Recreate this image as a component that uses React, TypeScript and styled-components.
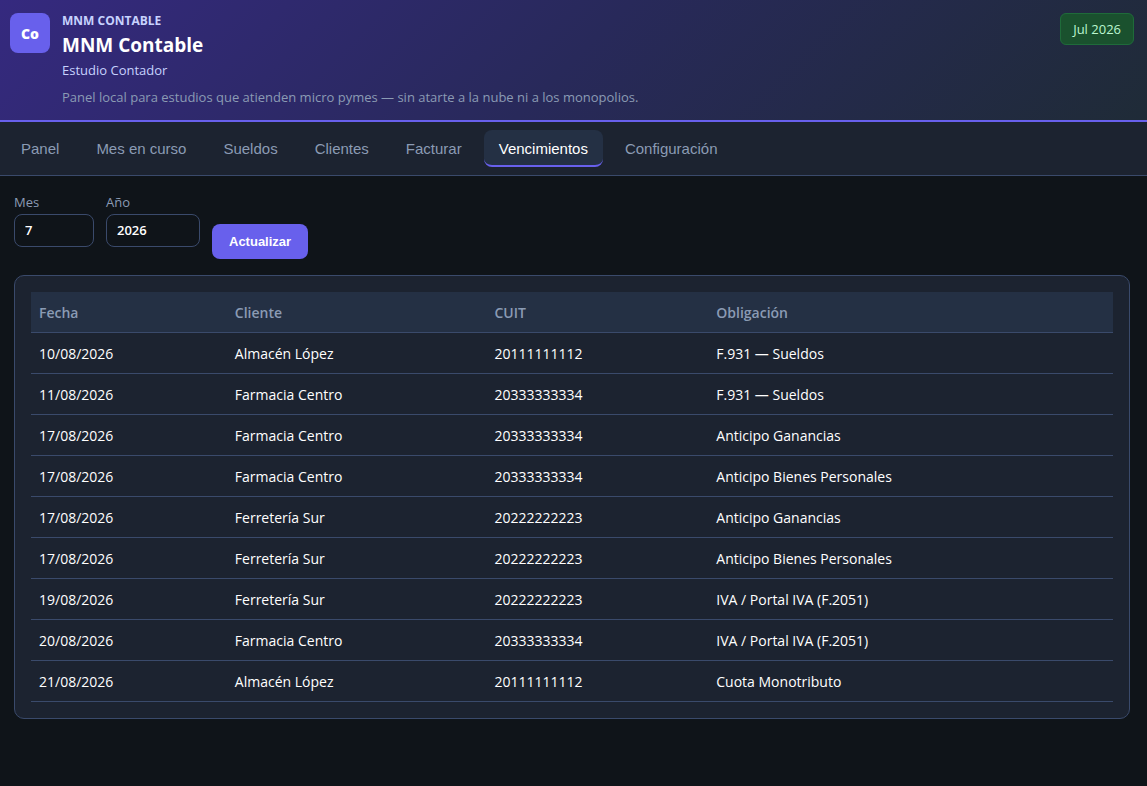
import React, { useState } from 'react';
import styled, { createGlobalStyle } from 'styled-components';

const GlobalStyle = createGlobalStyle`
  *, *::before, *::after { box-sizing: border-box; }
  body {
    margin: 0;
    background: #0f1419;
    color: #ffffff;
    font-family: 'Segoe UI', 'Open Sans', 'Noto Sans', sans-serif;
    font-size: 14px;
  }
`;

const Header = styled.header`
  display: flex;
  align-items: flex-start;
  gap: 12px;
  padding: 12px 13px 13px 10px;
  background: linear-gradient(135deg, #35297f 0%, #28295a 50%, #1f2b37 100%);
  border-bottom: 2px solid #6860ec;
`;

const Logo = styled.div`
  display: flex;
  align-items: center;
  justify-content: center;
  width: 40px;
  height: 40px;
  margin-top: 1px;
  border-radius: 8px;
  background: #6860ec;
  font-size: 14px;
  font-weight: 800;
`;

const Brand = styled.div`
  flex: 1;
`;

const Eyebrow = styled.p`
  margin: 0;
  color: #c7d2fe;
  font-size: 12px;
  line-height: 18px;
  font-weight: 700;
  text-transform: uppercase;
`;

const Title = styled.h1`
  margin: 0;
  font-size: 19px;
  line-height: 30px;
  font-weight: 700;
`;

const Subtitle = styled.p`
  margin: 0;
  color: #c7d2fe;
  font-size: 13px;
  line-height: 20px;
`;

const Tagline = styled.p`
  margin: 7px 0 0;
  color: #8b9bb4;
  font-size: 13px;
  line-height: 20px;
`;

const Period = styled.span`
  margin-top: 1px;
  padding: 5px 12px;
  border: 1px solid #1f6b3a;
  border-radius: 6px;
  background: #1a512e;
  color: #bbf7d0;
  font-size: 13px;
  line-height: 20px;
`;

const Nav = styled.nav`
  display: flex;
  flex-wrap: wrap;
  gap: 7px;
  padding: 8px 6px;
  background: #1c2330;
  border-bottom: 1px solid #3a4a6b;
`;

const Tab = styled.button<{ $active: boolean }>`
  height: 37px;
  padding: 2px 15px 0;
  border: 0;
  border-bottom: 2px solid ${p => (p.$active ? '#6860ec' : 'transparent')};
  border-radius: 8px;
  background: ${p => (p.$active ? '#243044' : 'transparent')};
  color: ${p => (p.$active ? '#ffffff' : '#8b9bb4')};
  font: 15px 'Liberation Sans', Arial, sans-serif;
  cursor: pointer;
`;

const Main = styled.main`
  padding: 16px 17px 16px 14px;
`;

const Filters = styled.form`
  display: flex;
  align-items: flex-end;
  gap: 12px;
  margin-bottom: 16px;
`;

const Field = styled.label<{ $width: number }>`
  display: flex;
  flex-direction: column;
  gap: 2px;
  width: ${p => p.$width}px;
  margin-bottom: 12px;
  color: #8b9bb4;
  font-size: 13px;
  line-height: 20px;
`;

const Input = styled.input`
  width: 100%;
  height: 33px;
  padding: 0 10px 2px;
  border: 1px solid #3a4a6b;
  border-radius: 8px;
  background: #0f1419;
  color: #ffffff;
  font: 600 13px 'Segoe UI', 'Open Sans', 'Noto Sans', sans-serif;
`;

const Submit = styled.button`
  height: 35px;
  padding: 0 17px;
  border: 0;
  border-radius: 8px;
  background: #6860ec;
  color: #ffffff;
  font: bold 13px 'Liberation Sans', Arial, sans-serif;
  cursor: pointer;
`;

const Card = styled.section`
  padding: 16px;
  border: 1px solid #3a4a6b;
  border-radius: 10px;
  background: #1c2330;
`;

const Table = styled.table`
  width: 100%;
  table-layout: fixed;
  border-spacing: 0;
`;

const HeadCell = styled.th<{ $width: string }>`
  width: ${p => p.$width};
  height: 41px;
  padding: 0 8px;
  border-bottom: 1px solid #3a4a6b;
  background: #243044;
  color: #8b9bb4;
  font-size: 14px;
  font-weight: 600;
  text-align: left;
`;

const Cell = styled.td`
  height: 41px;
  padding: 0 8px;
  border-bottom: 1px solid #3a4a6b;
  font-size: 14px;
`;

const tabs = ['Panel', 'Mes en curso', 'Sueldos', 'Clientes', 'Facturar', 'Vencimientos', 'Configuración'];

const columns = [
  { label: 'Fecha', width: '18.1%' },
  { label: 'Cliente', width: '24%' },
  { label: 'CUIT', width: '20.5%' },
  { label: 'Obligación', width: '37.4%' },
];

const rows = [
  ['10/08/2026', 'Almacén López', '20111111112', 'F.931 — Sueldos'],
  ['11/08/2026', 'Farmacia Centro', '20333333334', 'F.931 — Sueldos'],
  ['17/08/2026', 'Farmacia Centro', '20333333334', 'Anticipo Ganancias'],
  ['17/08/2026', 'Farmacia Centro', '20333333334', 'Anticipo Bienes Personales'],
  ['17/08/2026', 'Ferretería Sur', '20222222223', 'Anticipo Ganancias'],
  ['17/08/2026', 'Ferretería Sur', '20222222223', 'Anticipo Bienes Personales'],
  ['19/08/2026', 'Ferretería Sur', '20222222223', 'IVA / Portal IVA (F.2051)'],
  ['20/08/2026', 'Farmacia Centro', '20333333334', 'IVA / Portal IVA (F.2051)'],
  ['21/08/2026', 'Almacén López', '20111111112', 'Cuota Monotributo'],
];

export default function App() {
  const [active, setActive] = useState('Vencimientos');
  const [month, setMonth] = useState('7');
  const [year, setYear] = useState('2026');

  return (
    <>
      <GlobalStyle />
      <Header>
        <Logo>Co</Logo>
        <Brand>
          <Eyebrow>MNM Contable</Eyebrow>
          <Title>MNM Contable</Title>
          <Subtitle>Estudio Contador</Subtitle>
          <Tagline>Panel local para estudios que atienden micro pymes — sin atarte a la nube ni a los monopolios.</Tagline>
        </Brand>
        <Period>Jul 2026</Period>
      </Header>
      <Nav>
        {tabs.map(tab => (
          <Tab key={tab} type="button" $active={tab === active} onClick={() => setActive(tab)}>
            {tab}
          </Tab>
        ))}
      </Nav>
      <Main>
        <Filters onSubmit={e => e.preventDefault()}>
          <Field $width={80} htmlFor="mes">
            Mes
            <Input id="mes" inputMode="numeric" value={month} onChange={e => setMonth(e.target.value)} />
          </Field>
          <Field $width={94} htmlFor="anio">
            Año
            <Input id="anio" inputMode="numeric" value={year} onChange={e => setYear(e.target.value)} />
          </Field>
          <Submit type="submit">Actualizar</Submit>
        </Filters>
        <Card>
          <Table>
            <thead>
              <tr>
                {columns.map(c => (
                  <HeadCell key={c.label} scope="col" $width={c.width}>{c.label}</HeadCell>
                ))}
              </tr>
            </thead>
            <tbody>
              {rows.map((row, i) => (
                <tr key={i}>
                  {row.map((value, j) => (
                    <Cell key={j}>{value}</Cell>
                  ))}
                </tr>
              ))}
            </tbody>
          </Table>
        </Card>
      </Main>
    </>
  );
}
